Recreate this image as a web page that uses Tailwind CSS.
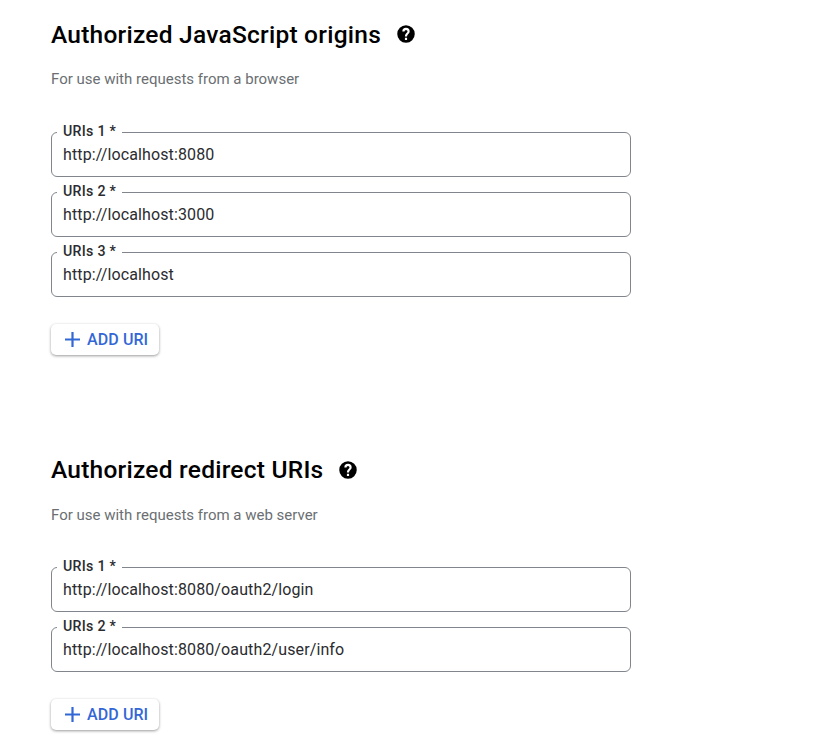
<!DOCTYPE html>
<html lang="en"><head><meta charset="utf-8"><title>Authorized URIs</title>
<script src="https://cdn.jsdelivr.net/npm/@tailwindcss/browser@4"></script></head>
<body class="bg-white font-['Roboto',sans-serif] text-black">
<svg class="hidden"><symbol id="help" viewBox="0 0 24 24"><path fill-rule="evenodd" d="M12 1.5a10.5 10.5 0 1 0 0 21a10.5 10.5 0 0 0 0-21zM13.3 19.2h-2.6v-2.6h2.6zM15.5 11.2l-1 1c-.8.8-1.2 1.5-1.2 2.9h-2.6v-.6c0-1.2.5-2.2 1.3-3l1.2-1.2c.4-.4.6-.8.6-1.3a1.8 1.8 0 0 0-3.6 0H7.6a4.4 4.4 0 0 1 8.8 0c0 .9-.4 1.7-.9 2.2z"/></symbol></svg>
<main class="w-[825px] h-[744px] overflow-hidden pl-[51px] pt-[19px]">
<section class="h-[435px]">
<div class="flex items-center h-[31px]"><h2 class="pt-0.5 text-[24.5px] font-medium tracking-[0.24px]">Authorized JavaScript origins</h2>
<svg class="mb-0.5 ml-[15px] size-5"><use href="#help"/></svg></div>
<p class="mt-[19px] text-[15px] leading-5 text-[#6b6f73]">For use with requests from a browser</p>
<div class="mt-[33px] flex flex-col w-[580px] gap-[5px] text-base tracking-[0.12px] text-[#2b2c2f]">
<fieldset class="h-[55px] border border-[#80868b] rounded-md px-[5px]"><legend class="h-5 px-[6px] text-[14.2px] leading-[18px] font-medium tracking-[0.28px]">URIs 1 *</legend><div class="px-[6px] leading-[26px]">http://localhost:8080</div></fieldset>
<fieldset class="h-[55px] border border-[#80868b] rounded-md px-[5px]"><legend class="h-5 px-[6px] text-[14.2px] leading-[18px] font-medium tracking-[0.28px]">URIs 2 *</legend><div class="px-[6px] leading-[26px]">http://localhost:3000</div></fieldset>
<fieldset class="h-[55px] border border-[#80868b] rounded-md px-[5px]"><legend class="h-5 px-[6px] text-[14.2px] leading-[18px] font-medium tracking-[0.28px]">URIs 3 *</legend><div class="px-[6px] leading-[26px]">http://localhost</div></fieldset>
</div>
<button class="mt-[27px] flex h-[31px] w-[108px] items-center rounded-[5px] bg-white pl-[14px] text-base font-medium text-[#3367d6] shadow-[0_1px_3px_rgba(0,0,0,0.4)]"><svg class="mr-[7px] size-[15px] shrink-0" viewBox="0 0 15 15"><path fill="currentColor" d="M6.4 0h2.2v6.4H15v2.2H8.6V15H6.4V8.6H0V6.4h6.4z"/></svg><span class="whitespace-nowrap tracking-[0.1px]">ADD URI</span></button>
</section>
<section>
<div class="flex items-center h-[31px]"><h2 class="pt-0.5 text-[24.5px] font-medium tracking-[0.24px]">Authorized redirect URIs</h2>
<svg class="ml-[15px] size-5"><use href="#help"/></svg></div>
<p class="mt-5 text-[15px] leading-5 text-[#6b6f73]">For use with requests from a web server</p>
<div class="mt-8 flex flex-col w-[580px] gap-[5px] text-base tracking-[0.12px] text-[#2b2c2f]">
<fieldset class="h-[55px] border border-[#80868b] rounded-md px-[5px]"><legend class="h-5 px-[6px] text-[14.2px] leading-[18px] font-medium tracking-[0.28px]">URIs 1 *</legend><div class="px-[6px] leading-[26px]">http://localhost:8080/oauth2/login</div></fieldset>
<fieldset class="h-[55px] border border-[#80868b] rounded-md px-[5px]"><legend class="h-5 px-[6px] text-[14.2px] leading-[18px] font-medium tracking-[0.28px]">URIs 2 *</legend><div class="px-[6px] leading-[26px]">http://localhost:8080/oauth2/user/info</div></fieldset>
</div>
<button class="mt-[27px] flex h-[31px] w-[108px] items-center rounded-[5px] bg-white pl-[14px] text-base font-medium text-[#3367d6] shadow-[0_1px_3px_rgba(0,0,0,0.4)]"><svg class="mr-[7px] size-[15px] shrink-0" viewBox="0 0 15 15"><path fill="currentColor" d="M6.4 0h2.2v6.4H15v2.2H8.6V15H6.4V8.6H0V6.4h6.4z"/></svg><span class="whitespace-nowrap tracking-[0.1px]">ADD URI</span></button>
</section>
</main></body></html>
